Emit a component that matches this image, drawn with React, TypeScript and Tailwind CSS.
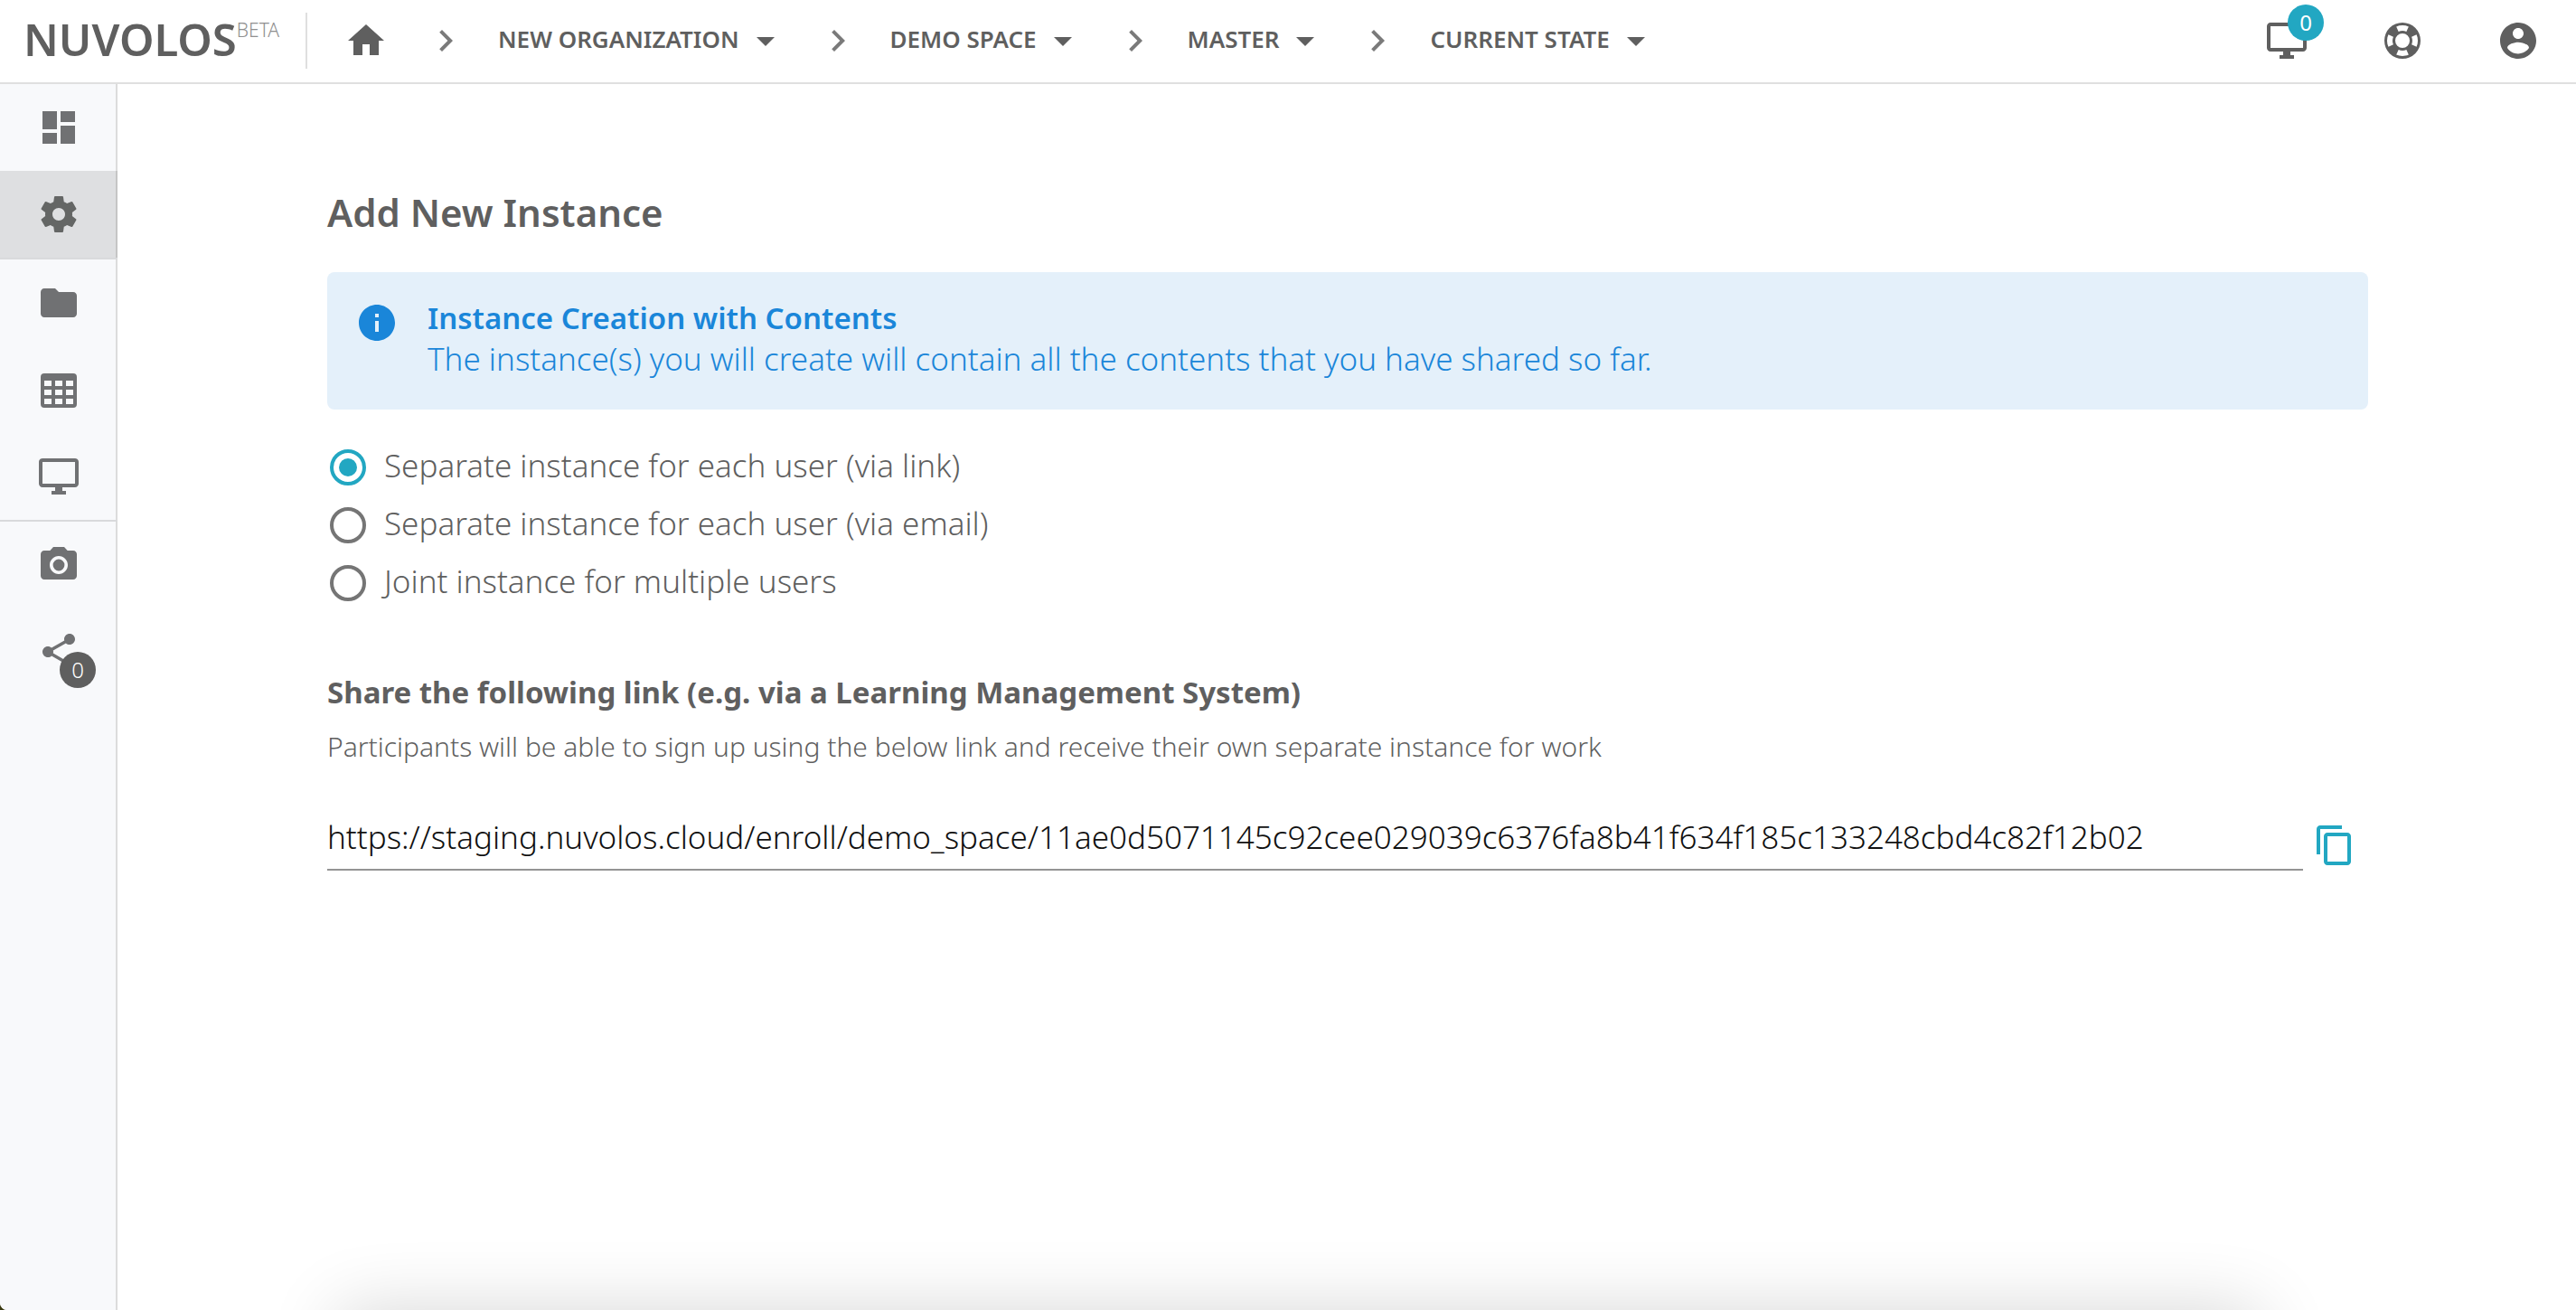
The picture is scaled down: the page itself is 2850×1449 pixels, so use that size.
import { useState } from "react";

const paths = {
  home: "M10 20v-6h4v6h5v-8h3L12 3 2 12h3v8z",
  chevron: "M10 6L8.59 7.41 13.17 12l-4.58 4.59L10 18l6-6z",
  arrowDown: "M7 10l5 5 5-5z",
  monitor:
    "M21 2H3c-1.1 0-2 .9-2 2v12c0 1.1.9 2 2 2h7v2H8v2h8v-2h-2v-2h7c1.1 0 2-.9 2-2V4c0-1.1-.9-2-2-2zm0 14H3V4h18v12z",
  lifebuoy:
    "M19.79 15.41C20.74 13.24 20.74 10.75 19.79 8.59L17.05 9.83C17.65 11.21 17.65 12.78 17.06 14.17L19.79 15.41M15.42 4.21C13.25 3.26 10.76 3.26 8.59 4.21L9.83 6.94C11.22 6.35 12.79 6.35 14.18 6.95L15.42 4.21M4.21 8.58C3.26 10.76 3.26 13.24 4.21 15.42L6.95 14.17C6.35 12.79 6.35 11.21 6.95 9.82L4.21 8.58M8.59 19.79C10.76 20.74 13.25 20.74 15.42 19.78L14.18 17.05C12.8 17.65 11.22 17.65 9.84 17.06L8.59 19.79M12 2A10 10 0 0 1 22 12A10 10 0 0 1 12 22A10 10 0 0 1 2 12A10 10 0 0 1 12 2M12 8A4 4 0 0 0 8 12A4 4 0 0 0 12 16A4 4 0 0 0 16 12A4 4 0 0 0 12 8Z",
  account:
    "M12 2C6.48 2 2 6.48 2 12s4.48 10 10 10 10-4.48 10-10S17.52 2 12 2zm0 3c1.66 0 3 1.34 3 3s-1.34 3-3 3-3-1.34-3-3 1.34-3 3-3zm0 14.2c-2.5 0-4.71-1.28-6-3.22.03-1.99 4-3.08 6-3.08 1.99 0 5.97 1.09 6 3.08-1.29 1.94-3.5 3.22-6 3.22z",
  dashboard: "M3 13h8V3H3v10zm0 8h8v-6H3v6zm10 0h8V11h-8v10zm0-18v6h8V3h-8z",
  settings:
    "M19.43 12.98c.04-.32.07-.64.07-.98s-.03-.66-.07-.98l2.11-1.65c.19-.15.24-.42.12-.64l-2-3.46c-.12-.22-.39-.3-.61-.22l-2.49 1c-.52-.4-1.08-.73-1.69-.98l-.38-2.65C14.46 2.18 14.25 2 14 2h-4c-.25 0-.46.18-.49.42l-.38 2.65c-.61.25-1.17.59-1.69.98l-2.49-1c-.23-.09-.49 0-.61.22l-2 3.46c-.13.22-.07.49.12.64l2.11 1.65c-.04.32-.07.65-.07.98s.03.66.07.98l-2.11 1.65c-.19.15-.24.42-.12.64l2 3.46c.12.22.39.3.61.22l2.49-1c.52.4 1.08.73 1.69.98l.38 2.65c.03.24.24.42.49.42h4c.25 0 .46-.18.49-.42l.38-2.65c.61-.25 1.17-.59 1.69-.98l2.49 1c.23.09.49 0 .61-.22l2-3.46c.12-.22.07-.49-.12-.64l-2.11-1.65zM12 15.5c-1.93 0-3.5-1.57-3.5-3.5s1.57-3.5 3.5-3.5 3.5 1.57 3.5 3.5-1.57 3.5-3.5 3.5z",
  folder:
    "M10 4H4c-1.1 0-1.99.9-1.99 2L2 18c0 1.1.9 2 2 2h16c1.1 0 2-.9 2-2V8c0-1.1-.9-2-2-2h-8l-2-2z",
  table:
    "M4 3h16a2 2 0 0 1 2 2v15a2 2 0 0 1-2 2H4a2 2 0 0 1-2-2V5a2 2 0 0 1 2-2zM4 7v3h4V7zM10 7v3h4V7zM16 7v3h4V7zM4 12v3h4v-3zM10 12v3h4v-3zM16 12v3h4v-3zM4 17v3h4v-3zM10 17v3h4v-3zM16 17v3h4v-3z",
  camera:
    "M12 8.8a3.2 3.2 0 1 0 0 6.4 3.2 3.2 0 0 0 0-6.4zM9 2L7.17 4H4c-1.1 0-2 .9-2 2v12c0 1.1.9 2 2 2h16c1.1 0 2-.9 2-2V6c0-1.1-.9-2-2-2h-3.17L15 2H9zm3 15c-2.76 0-5-2.24-5-5s2.24-5 5-5 5 2.24 5 5-2.24 5-5 5z",
  share:
    "M18 16.08c-.76 0-1.44.3-1.96.77L8.91 12.7c.05-.23.09-.46.09-.7s-.04-.47-.09-.7l7.05-4.11c.54.5 1.25.81 2.04.81 1.66 0 3-1.34 3-3s-1.34-3-3-3-3 1.34-3 3c0 .24.04.47.09.7L8.04 9.81C7.5 9.31 6.79 9 6 9c-1.66 0-3 1.34-3 3s1.34 3 3 3c.79 0 1.5-.31 2.04-.81l7.12 4.16c-.05.21-.08.43-.08.65 0 1.61 1.31 2.92 2.92 2.92 1.61 0 2.92-1.31 2.92-2.92s-1.31-2.92-2.92-2.92z",
  info: "M12 2C6.48 2 2 6.48 2 12s4.48 10 10 10 10-4.48 10-10S17.52 2 12 2zm1 15h-2v-6h2v6zm0-8h-2V7h2v2z",
  copy: "M16 1H4c-1.1 0-2 .9-2 2v14h2V3h12V1zm3 4H8c-1.1 0-2 .9-2 2v14c0 1.1.9 2 2 2h11c1.1 0 2-.9 2-2V7c0-1.1-.9-2-2-2zm0 16H8V7h11v14z",
};

type IconName = keyof typeof paths;

function Icon({ name, className = "" }: { name: IconName; className?: string }) {
  return (
    <svg viewBox="0 0 24 24" fill="currentColor" fillRule="evenodd" aria-hidden="true" className={`size-12 shrink-0 ${className}`}>
      <path d={paths[name]} />
    </svg>
  );
}

const crumbs = ["NEW ORGANIZATION", "DEMO SPACE", "MASTER", "CURRENT STATE"];

const options = [
  "Separate instance for each user (via link)",
  "Separate instance for each user (via email)",
  "Joint instance for multiple users",
];

function Header() {
  return (
    <header className="flex items-center border-b-2 border-[#dfdfdf] bg-white pr-10 pb-px pl-[26px] text-[#5f5f5f]">
      <a href="#" aria-label="Nuvolos home page" className="flex w-[312px] shrink-0 items-start pb-1">
        <span className="text-[49px] leading-[49px] font-semibold">NUVOLOS</span>
        <span className="mt-1 text-[21px] leading-[20px] font-light text-[#8f8f8f]">BETA</span>
      </a>
      <div className="my-3.5 h-[62px] w-0.5 bg-[#dfdfdf]" />
      <nav aria-label="Breadcrumb" className="ml-[41px] flex items-center">
        <a href="#" aria-label="Home" className="mr-10">
          <Icon name="home" />
        </a>
        {crumbs.map((crumb) => (
          <div key={crumb} className="mr-8 flex items-center">
            <Icon name="chevron" className="text-[#7a7a7a]" />
            <button type="button" className="ml-[34px] flex items-center gap-[5px]">
              <span className="pb-1 text-[26px] leading-[36px] font-semibold whitespace-nowrap">{crumb}</span>
              <Icon name="arrowDown" />
            </button>
          </div>
        ))}
      </nav>
      <div className="ml-auto flex items-center gap-20">
        <button type="button" aria-label="Running applications" className="relative">
          <Icon name="monitor" />
          <span className="absolute -top-4 left-[25px] flex size-10 items-center justify-center rounded-full bg-[#22a7c2] text-[24px] leading-none text-white">
            0
          </span>
        </button>
        <button type="button" aria-label="Help">
          <Icon name="lifebuoy" />
        </button>
        <button type="button" aria-label="Account">
          <Icon name="account" />
        </button>
      </div>
    </header>
  );
}

function SideItem({ name, label, active = false, divided = false, badge }: { name: IconName; label: string; active?: boolean; divided?: boolean; badge?: string }) {
  return (
    <a
      href="#"
      aria-label={label}
      className={`-mr-0.5 flex justify-center py-6 ${active ? "bg-black/10 text-[#646665]" : "text-[#707173]"} ${divided ? "border-b-2 border-[#d9dadc]" : ""}`}
    >
      <span className="relative">
        <Icon name={name} />
        {badge && (
          <span className="absolute top-6 left-[25px] flex size-10 items-center justify-center rounded-full bg-[#5f5f5f] text-[24px] leading-none font-light text-white">
            {badge}
          </span>
        )}
      </span>
    </a>
  );
}

function Sidebar() {
  return (
    <nav aria-label="Sections" className="w-[130px] shrink-0 border-r-2 border-[#dcdcdc] bg-[#f8f9fb]">
      <SideItem name="dashboard" label="Dashboard" />
      <SideItem name="settings" label="Settings" active divided />
      <SideItem name="folder" label="Files" />
      <SideItem name="table" label="Tables" />
      <SideItem name="monitor" label="Applications" divided />
      <SideItem name="camera" label="Snapshots" />
      <SideItem name="share" label="Share" badge="0" />
    </nav>
  );
}

export default function App() {
  const [selected, setSelected] = useState(0);
  return (
    <div className="h-screen overflow-hidden bg-[#3b3a12] font-['Noto_Sans',sans-serif]">
      <div className="relative flex h-full flex-col overflow-hidden rounded-bl-lg bg-white">
        <Header />
        <div className="flex min-h-0 flex-1">
          <Sidebar />
          <main className="min-w-0 flex-1 pt-[117px] pr-[230px] pl-[232px] text-[#5f5f5f]">
            <h1 className="text-[42px] leading-[50px] font-semibold">Add New Instance</h1>

            <section className="mt-[41px] flex gap-8 rounded-lg bg-[#e4f0fa] pt-7 pr-8 pb-[34px] pl-[31px] text-[#1a86d9]">
              <Icon name="info" className="mt-1" />
              <div className="leading-[45px]">
                <h2 className="text-[33px] font-semibold">Instance Creation with Contents</h2>
                <p className="text-[35px] font-light">
                  The instance(s) you will create will contain all the contents that you have shared so far.
                </p>
              </div>
            </section>

            <div role="radiogroup" aria-label="Instance type" className="mt-8">
              {options.map((option, i) => (
                <label key={option} className="flex h-16 items-center gap-5 pl-[3px]">
                  <input
                    type="radio"
                    name="instance-type"
                    checked={selected === i}
                    onChange={() => setSelected(i)}
                    className="grid size-10 shrink-0 appearance-none place-content-center rounded-full border-4 border-[#757575] before:size-5 before:rounded-full checked:border-[#22a7c2] checked:before:bg-[#22a7c2]"
                  />
                  <span className="pb-1 text-[35px] leading-[44px] font-light">{option}</span>
                </label>
              ))}
            </div>

            <h2 className="mt-[67px] text-[33px] leading-[44px] font-bold">
              Share the following link (e.g. via a Learning Management System)
            </h2>
            <p className="mt-[18px] text-[30px] leading-[40px] font-light">
              Participants will be able to sign up using the below link and receive their own separate instance for work
            </p>

            <div className="mt-14 flex items-end gap-[11px] pr-[13px]">
              <input
                type="text"
                readOnly
                aria-label="Enrollment link"
                value="https://staging.nuvolos.cloud/enroll/demo_space/11ae0d5071145c92cee029039c6376fa8b41f634f185c133248cbd4c82f12b02"
                className="min-w-0 flex-1 border-b-2 border-[#949494] pb-[11px] text-[35px] leading-[48px] font-light text-[#111111] outline-none"
              />
              <button type="button" aria-label="Copy link" className="mb-1 text-[#22a7c2]">
                <Icon name="copy" />
              </button>
            </div>
          </main>
        </div>
        <div className="pointer-events-none absolute top-full right-[350px] left-[375px] h-40 shadow-[0_0_80px_rgba(0,0,0,0.16)]" />
      </div>
    </div>
  );
}
